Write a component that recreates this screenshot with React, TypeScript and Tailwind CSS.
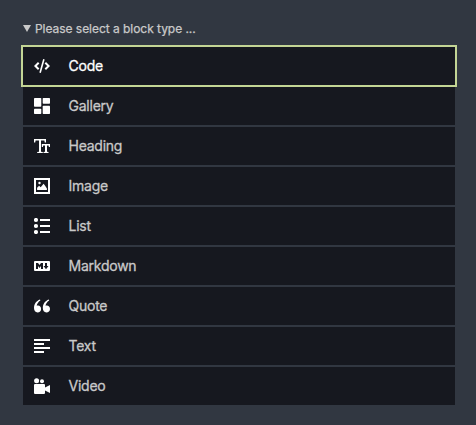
import type { ReactNode } from "react";

type BlockType = { label: string; icon: ReactNode };

const blocks: BlockType[] = [
  {
    label: "Code",
    icon: (
      <>
        <path
          d="M4.7 4.7 1.4 8l3.3 3.3M11.3 4.7l3.3 3.3-3.3 3.3"
          fill="none"
          stroke="currentColor"
          strokeWidth="2"
        />
        <path d="M9.9 1.3 6.1 14.7" fill="none" stroke="currentColor" strokeWidth="1.6" />
      </>
    ),
  },
  {
    label: "Gallery",
    icon: (
      <>
        <rect x="0" y="0" width="7.3" height="8.8" rx=".7" />
        <rect x="8.7" y="0" width="7.3" height="5.8" rx=".7" />
        <rect x="0" y="10.8" width="7.3" height="5.2" rx=".7" />
        <rect x="8.7" y="7.8" width="7.3" height="8.2" rx=".7" />
      </>
    ),
  },
  {
    label: "Heading",
    icon: (
      <>
        <path d="M0 1h12v3.4h-1.2L10.4 2.5H7v11.3l1.8.3v1H3.2v-1l1.8-.3V2.5H1.6L1.2 4.4H0z" />
        <path d="M7.8 6H16v3.1h-1.1l-.3-1.5H13v6.2l1.5.3v1H9.5v-1l1.5-.3V7.6H9.2l-.3 1.5H7.8z" />
      </>
    ),
  },
  {
    label: "Image",
    icon: (
      <>
        <path d="M0 0h16v16H0zM2 2v12h12V2z" fillRule="evenodd" />
        <path d="M3.1 12V9.8L5.1 7.8l1.6 1.5L9.6 5.8l1.5 2 1.8 2.6V12z" />
        <circle cx="5.5" cy="5" r="1.2" />
      </>
    ),
  },
  {
    label: "List",
    icon: (
      <>
        <circle cx="2" cy="2" r="2.1" />
        <circle cx="2" cy="8" r="2.1" />
        <circle cx="2" cy="14" r="2.1" />
        <path d="M6 1h10v2H6zM6 7h10v2H6zM6 13h10v2H6z" />
      </>
    ),
  },
  {
    label: "Markdown",
    icon: (
      <path
        fillRule="evenodd"
        d="M1 3h14a1 1 0 0 1 1 1v8a1 1 0 0 1-1 1H1a1 1 0 0 1-1-1V4a1 1 0 0 1 1-1zM2 5v6h2V8l1.5 1.9L7 8v3h2V5H7L5.5 7 4 5zM11 5v3H9.5l2.5 3.3L14.5 8H13V5z"
      />
    ),
  },
  {
    label: "Quote",
    icon: (
      <>
        <path d="M6 1.5C2.2 2.9 0 6.2 0 10.1c0 2.7 1.4 4.4 3.6 4.4 2 0 3.5-1.5 3.5-3.5S5.8 7.6 4 7.6c-.5 0-1 .1-1.3.2.3-2 1.6-3.8 3.7-5.2z" />
        <path d="M14.8 1.5C11 2.9 8.8 6.2 8.8 10.1c0 2.7 1.4 4.4 3.6 4.4 2 0 3.6-1.5 3.6-3.5s-1.4-3.4-3.2-3.4c-.5 0-1 .1-1.3.2.3-2 1.6-3.8 3.7-5.2z" />
      </>
    ),
  },
  {
    label: "Text",
    icon: <path d="M0 1h16v2H0zM0 5h10v2H0zM0 9h16v2H0zM0 13h10v2H0z" />,
  },
  {
    label: "Video",
    icon: (
      <>
        <circle cx="2.6" cy="2.8" r="2.5" />
        <circle cx="8" cy="3.2" r="2" />
        <path d="M1 6h9a1 1 0 0 1 1 1v2.4L16 7v8l-5-2.4V15a1 1 0 0 1-1 1H1a1 1 0 0 1-1-1V7a1 1 0 0 1 1-1z" />
      </>
    ),
  },
];

export default function App() {
  return (
    <main className="h-[425px] w-[476px] bg-[#313741] pr-[21px] pl-[23px] pt-5 font-['Inter',sans-serif] text-[#c9c9c9]">
      <div className="flex h-[17px] items-center">
        <svg className="mr-1 h-[7px] w-2" viewBox="0 0 8 7" fill="currentColor" aria-hidden="true">
          <path d="M0 0h8L4 7z" />
        </svg>
        <span className="text-[12px] leading-[17px] tracking-[-0.04px] [-webkit-text-stroke:0.25px]">
          Please select a block type ...
        </span>
      </div>
      <ul className="mt-2.5 flex flex-col gap-0.5">
        {blocks.map(({ label, icon }, i) => (
          <li key={label}>
            <button
              type="button"
              className={
                i === 0
                  ? "relative flex h-[38px] w-full items-center bg-[#16181f] pl-[11px] text-white outline-2 outline-[#c3d595]"
                  : "flex h-[38px] w-full items-center bg-[#16181f] pl-[11px]"
              }
            >
              <svg className="h-4 w-4 text-white" viewBox="0 0 16 16" fill="currentColor" aria-hidden="true">
                {icon}
              </svg>
              <span className="ml-[18.5px] text-[14px] leading-5 tracking-[-0.24px] [-webkit-text-stroke:0.3px]">
                {label}
              </span>
            </button>
          </li>
        ))}
      </ul>
    </main>
  );
}
